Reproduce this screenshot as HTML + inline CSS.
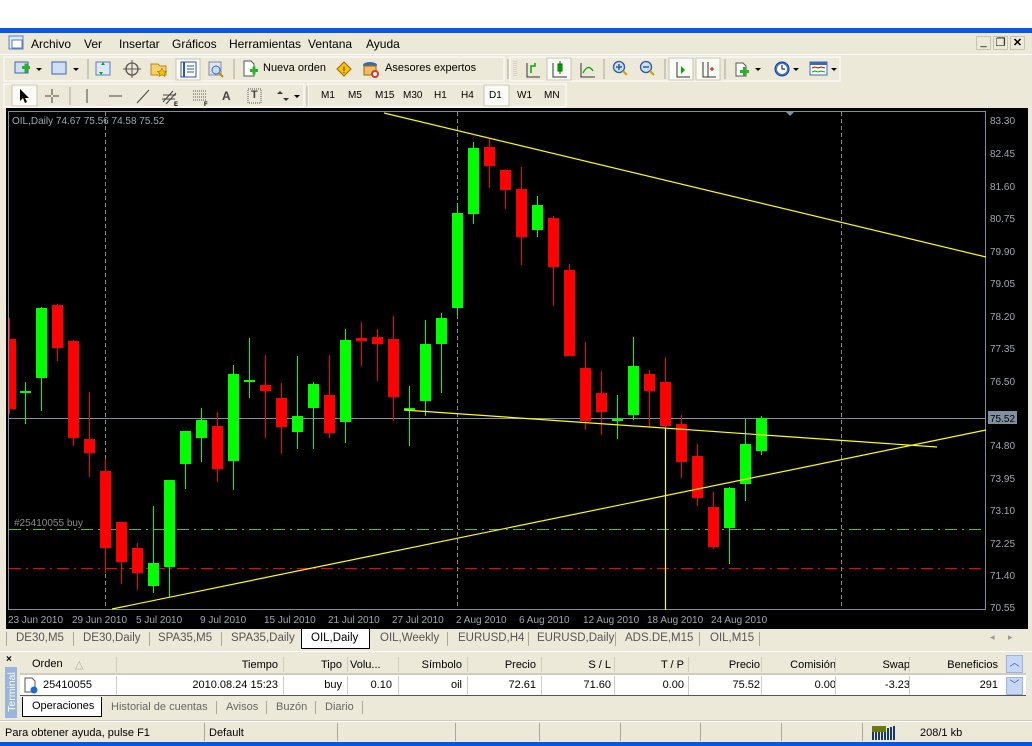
<!DOCTYPE html>
<html><head><meta charset="utf-8"><style>
*{margin:0;padding:0;box-sizing:border-box}
body{width:1032px;height:746px;overflow:hidden;background:#fff;font-family:"Liberation Sans",sans-serif;font-size:11px;color:#000;position:relative}
.abs{position:absolute}
.bar{background:#ece9d8}
.menu span{position:absolute;top:4px;font-size:12px}
.tb span{position:absolute;font-size:11px}
.tab{position:absolute;top:3px;color:#555;font-size:11.5px}
.hd{position:absolute;top:5px;text-align:right}
.sep{position:absolute;width:1px;background:#aca899}
</style></head><body>
<div class="abs" style="left:0;top:28px;width:1032px;height:5px;background:#0a56e0"></div>
<div class="abs bar" style="left:0;top:33px;width:1032px;height:713px"></div>
<!-- menu -->
<div class="abs menu" style="left:0;top:33px;width:1032px;height:21px">
<svg class="abs" style="left:8px;top:2px" width="17" height="16"><rect x="1" y="1" width="14" height="13" fill="#dde8f8" stroke="#5a7fc0"/><rect x="4" y="5" width="10" height="8" fill="#fff" stroke="#5a7fc0"/></svg>
<span style="left:31px">Archivo</span><span style="left:84px">Ver</span><span style="left:119px">Insertar</span><span style="left:172px">Gráficos</span><span style="left:229px">Herramientas</span><span style="left:308px">Ventana</span><span style="left:366px">Ayuda</span>
<div class="abs" style="left:976px;top:3px;width:15px;height:14px;border:1px solid #c8c4b0;text-align:center;line-height:11px">_</div>
<div class="abs" style="left:993px;top:3px;width:15px;height:14px;border:1px solid #c8c4b0;text-align:center;line-height:12px">❐</div>
<div class="abs" style="left:1010px;top:3px;width:15px;height:14px;border:1px solid #c8c4b0;text-align:center;line-height:12px;font-weight:bold">✕</div>
</div>
<div class="abs" style="left:0;top:54px;width:1032px;height:1px;background:#fff"></div>
<!-- toolbar 1 -->
<div class="abs tb" style="left:0;top:55px;width:1032px;height:28px">
<svg class="abs" style="left:0;top:0" width="1032" height="28">
<rect x="4" y="2" width="500" height="24" fill="none" stroke="#fff"/>
<rect x="510" y="2" width="330" height="24" fill="none" stroke="#fff"/>
<g fill="#33a" ><rect x="15" y="7" width="13" height="11" fill="#cfe0f6" stroke="#3a6ab0"/><path d="M22 11h8v3h-8z M24.5 8.5h3v9h-3z" fill="#2ab22a"/><path d="M36 13l3 3 3-3z" fill="#000"/>
<rect x="52" y="7" width="14" height="12" fill="#cfe0f6" stroke="#3a6ab0"/><path d="M73 13l3 3 3-3z" fill="#000"/></g>
<line x1="88" y1="4" x2="88" y2="24" stroke="#aca899"/>
<rect x="96" y="7" width="14" height="13" fill="#dde8f8" stroke="#5a7fc0"/><path d="M101 10l2-3 2 3zM103 17l-2 3-2-3z" fill="#0a0"/>
<circle cx="132" cy="14" r="6" fill="none" stroke="#555" stroke-width="1.3"/><path d="M132 5v18M123 14h18" stroke="#555"/>
<path d="M151 9h7l2 2h6v9h-15z" fill="#f3d36a" stroke="#b08a20"/><path d="M162 13l1.5 3 3 .4-2.2 2 .6 3-2.9-1.5-2.9 1.5.6-3-2.2-2 3-.4z" fill="#f6c400" stroke="#a07800" stroke-width=".6"/>
<rect x="176" y="4" width="24" height="21" fill="#fbfbf6" stroke="#c8c4b0"/><rect x="181" y="7" width="15" height="15" fill="#fff" stroke="#2a55a0"/><path d="M184 7v15" stroke="#2a55a0" stroke-width="2"/><path d="M187 11h7M187 14h7M187 17h7" stroke="#2a55a0"/>
<rect x="209" y="7" width="12" height="13" fill="#e0e6f0" stroke="#7b8aa8"/><circle cx="216" cy="15" r="4" fill="#cde" stroke="#3a6ab0"/><path d="M219 18l4 4" stroke="#c80" stroke-width="2"/>
<line x1="234" y1="4" x2="234" y2="24" stroke="#aca899"/>
<path d="M244 6h7l3 3v12h-10z" fill="#fff" stroke="#555"/><path d="M250 14h8v3h-8zM252.5 11.5h3v8h-3z" fill="#2ab22a"/>
<path d="M344 7l7 7-7 7-7-7z" fill="#f6c400" stroke="#a06a00"/><text x="342.5" y="18" font-size="9" font-weight="bold" fill="#a03000">!</text>
<ellipse cx="370" cy="10" rx="7" ry="3" fill="#3a6ab0"/><rect x="364" y="11" width="12" height="9" fill="#f0c060" stroke="#a06a00"/><circle cx="375" cy="19" r="4" fill="#d33"/><circle cx="375" cy="19" r="2" fill="#fff"/>
<line x1="508" y1="4" x2="508" y2="24" stroke="#aca899"/>
<path d="M514 6v16M516 6v16" stroke="#bbb" stroke-dasharray="1 1"/>
<path d="M527 8v14h13" stroke="#333" fill="none"/><path d="M531 18v-7h4v-3" stroke="#0a0" fill="none" stroke-width="1.5"/>
<rect x="547" y="3" width="24" height="22" fill="#fbfbf6" stroke="#c8c4b0"/><path d="M553 8v14h14" stroke="#333" fill="none"/><rect x="558" y="9" width="4" height="7" fill="#0c0" stroke="#060"/><path d="M560 6v13" stroke="#060"/>
<path d="M581 8v14h14" stroke="#333" fill="none"/><path d="M583 18q5-10 10-2" stroke="#0a0" fill="none" stroke-width="1.3"/>
<line x1="604" y1="4" x2="604" y2="24" stroke="#aca899"/>
<circle cx="619" cy="12" r="5.5" fill="#cfe0f6" stroke="#2a5aa0" stroke-width="1.3"/><path d="M616 12h6M619 9v6" stroke="#2a5aa0" stroke-width="1.5"/><path d="M623 16l4 4" stroke="#d9a000" stroke-width="2.2"/>
<circle cx="646" cy="12" r="5.5" fill="#cfe0f6" stroke="#2a5aa0" stroke-width="1.3"/><path d="M643 12h6" stroke="#2a5aa0" stroke-width="1.5"/><path d="M650 16l4 4" stroke="#d9a000" stroke-width="2.2"/>
<line x1="665" y1="4" x2="665" y2="24" stroke="#aca899"/>
<rect x="669" y="3" width="24" height="22" fill="#fbfbf6" stroke="#c8c4b0"/><path d="M677 7v15h13" stroke="#333" fill="none"/><path d="M681 11l4 4-4 4z" fill="#0a0"/>
<rect x="696" y="3" width="24" height="22" fill="#fbfbf6" stroke="#c8c4b0"/><path d="M703 7v15h13M708 7v15" stroke="#333" fill="none"/><path d="M710 14h4M712 12v4" stroke="#c00"/>
<line x1="725" y1="4" x2="725" y2="24" stroke="#aca899"/>
<path d="M736 8h7l3 3v10h-10z" fill="#fff" stroke="#555"/><path d="M740 15h9v3h-9zM743 12h3v9h-3z" fill="#2ab22a"/><path d="M755 13l3 3 3-3z" fill="#000"/>
<circle cx="782" cy="14" r="7" fill="#3a78d8" stroke="#1a3a90"/><circle cx="782" cy="14" r="5" fill="#fff"/><path d="M782 10v4h3" stroke="#000" fill="none"/><path d="M793 13l3 3 3-3z" fill="#000"/>
<rect x="810" y="7" width="17" height="13" fill="#fff" stroke="#3a6ab0"/><rect x="810" y="7" width="17" height="3" fill="#3a6ab0"/><path d="M812 13l3-1 3 1 3-1 4 1" stroke="#c00" fill="none"/><path d="M812 17l3-1 3 1 3-1 4 1" stroke="#0a0" fill="none"/><path d="M831 13l3 3 3-3z" fill="#000"/>
</svg>
<span style="left:263px;top:7px">Nueva orden</span><span style="left:385px;top:7px">Asesores expertos</span>
</div>
<!-- toolbar 2 -->
<div class="abs tb" style="left:0;top:83px;width:1032px;height:26px">
<svg class="abs" style="left:0;top:0" width="1032" height="26">
<rect x="4" y="1" width="300" height="23" fill="none" stroke="#fff"/><rect x="308" y="1" width="258" height="23" fill="none" stroke="#fff"/>
<rect x="12" y="2" width="25" height="21" fill="#fbfbf6" stroke="#c8c4b0"/><path d="M20 6v12l3-3 2 5 2-1-2-4h4z" fill="#000"/>
<path d="M52 6v6M52 14v6M45 13h6M53 13h6" stroke="#444"/>
<line x1="70" y1="4" x2="70" y2="22" stroke="#aca899"/>
<path d="M87 6v14" stroke="#444"/><path d="M109 13h13" stroke="#444"/><path d="M137 20l12-13" stroke="#444"/>
<path d="M163 19l10-11M166 21l10-11M163 12h13M162 16h13" stroke="#444"/><text x="174" y="23" font-size="6" font-weight="bold">E</text>
<path d="M193 8h14M193 11h14M193 14h14M193 17h14" stroke="#555" stroke-dasharray="1 1"/><text x="204" y="23" font-size="6" font-weight="bold">F</text>
<rect x="248" y="6" width="13" height="14" fill="none" stroke="#555" stroke-dasharray="1 1"/>
<path d="M277 11l3-3 3 3zM283 15l3 3 3-3z" fill="#333"/><path d="M294 12l3 3 3-3z" fill="#000"/>
<line x1="307" y1="3" x2="307" y2="23" stroke="#aca899"/>
<rect x="484" y="2" width="25" height="21" fill="#fbfbf6" stroke="#c8c4b0"/>
</svg>
<span style="left:222px;top:6px;font-size:12px;font-weight:bold;color:#444">A</span><span style="left:251px;top:6px;font-weight:bold;color:#444">T</span>
<span style="left:321px;top:7px;font-size:10px">M1</span><span style="left:348px;top:7px;font-size:10px">M5</span><span style="left:375px;top:7px;font-size:10px">M15</span><span style="left:403px;top:7px;font-size:10px">M30</span><span style="left:434px;top:7px;font-size:10px">H1</span><span style="left:461px;top:7px;font-size:10px">H4</span><span style="left:489px;top:7px;font-size:10px">D1</span><span style="left:517px;top:7px;font-size:10px">W1</span><span style="left:544px;top:7px;font-size:10px">MN</span>
</div>
<!-- chart -->
<svg class="abs" style="left:6px;top:108px" width="1022" height="521" viewBox="6 108 1022 521" font-family="Liberation Sans, sans-serif">
<rect x="6" y="108" width="1022" height="521" fill="#000"/>
<rect x="8.5" y="111.5" width="977" height="498" fill="none" stroke="#8090a0"/>
<g stroke="#8a8a8a" stroke-dasharray="4 3"><line x1="105.5" y1="112" x2="105.5" y2="609"/><line x1="457.5" y1="112" x2="457.5" y2="609"/><line x1="841.5" y1="112" x2="841.5" y2="609"/></g>
<line x1="9" y1="418.5" x2="985" y2="418.5" stroke="#8090a0"/>
<path d="M786 112h8l-4 4z" fill="#8090a0"/>
<line x1="9" y1="529.5" x2="985" y2="529.5" stroke="#3fbf3f" stroke-dasharray="12 5 2 5"/>
<line x1="9" y1="568.5" x2="985" y2="568.5" stroke="#ff0000" stroke-dasharray="12 5 2 5"/>
<text x="14" y="526" fill="#8a8a8a" font-size="10">#25410055 buy</text>
<text x="12" y="124" fill="#a0a8b0" font-size="10">OIL,Daily  74.67 75.56 74.58 75.52</text>
<g fill="#ff0000">
<rect x="9" y="318" width="1" height="96"/><rect x="9" y="339" width="7" height="70"/>
<rect x="57" y="304" width="1" height="57"/><rect x="52" y="305" width="11" height="43"/>
<rect x="73" y="340" width="1" height="106"/><rect x="68" y="341" width="11" height="97"/>
<rect x="89" y="392" width="1" height="85"/><rect x="84" y="439" width="11" height="14"/>
<rect x="105" y="459" width="1" height="114"/><rect x="100" y="471" width="11" height="77"/>
<rect x="121" y="522" width="1" height="62"/><rect x="116" y="522" width="11" height="40"/>
<rect x="137" y="543" width="1" height="47"/><rect x="132" y="548" width="11" height="25"/>
<rect x="217" y="412" width="1" height="70"/><rect x="212" y="426" width="11" height="43"/>
<rect x="265" y="355" width="1" height="83"/><rect x="260" y="385" width="11" height="6"/>
<rect x="281" y="383" width="1" height="71"/><rect x="276" y="398" width="11" height="29"/>
<rect x="329" y="355" width="1" height="83"/><rect x="324" y="395" width="11" height="38"/>
<rect x="361" y="322" width="1" height="44"/><rect x="356" y="338" width="11" height="3"/>
<rect x="377" y="329" width="1" height="52"/><rect x="372" y="337" width="11" height="7"/>
<rect x="393" y="316" width="1" height="105"/><rect x="388" y="339" width="11" height="58"/>
<rect x="489" y="139" width="1" height="49"/><rect x="484" y="147" width="11" height="19"/>
<rect x="505" y="169" width="1" height="40"/><rect x="500" y="170" width="11" height="20"/>
<rect x="521" y="167" width="1" height="98"/><rect x="516" y="189" width="11" height="48"/>
<rect x="553" y="216" width="1" height="90"/><rect x="548" y="218" width="11" height="49"/>
<rect x="569" y="264" width="1" height="92"/><rect x="564" y="270" width="11" height="86"/>
<rect x="585" y="342" width="1" height="88"/><rect x="580" y="368" width="11" height="53"/>
<rect x="601" y="371" width="1" height="64"/><rect x="596" y="393" width="11" height="19"/>
<rect x="649" y="370" width="1" height="57"/><rect x="644" y="374" width="11" height="17"/>
<rect x="665" y="357" width="1" height="73"/><rect x="660" y="382" width="11" height="44"/>
<rect x="681" y="415" width="1" height="63"/><rect x="676" y="424" width="11" height="38"/>
<rect x="697" y="444" width="1" height="62"/><rect x="692" y="456" width="11" height="42"/>
<rect x="713" y="492" width="1" height="57"/><rect x="708" y="507" width="11" height="40"/>
</g>
<g fill="#00ff00">
<rect x="25" y="382" width="1" height="42"/><rect x="20" y="391" width="11" height="2"/>
<rect x="41" y="307" width="1" height="104"/><rect x="36" y="308" width="11" height="70"/>
<rect x="153" y="506" width="1" height="87"/><rect x="148" y="563" width="11" height="23"/>
<rect x="169" y="480" width="1" height="117"/><rect x="164" y="480" width="11" height="87"/>
<rect x="185" y="431" width="1" height="58"/><rect x="180" y="431" width="11" height="33"/>
<rect x="201" y="408" width="1" height="54"/><rect x="196" y="420" width="11" height="18"/>
<rect x="233" y="365" width="1" height="125"/><rect x="228" y="374" width="11" height="87"/>
<rect x="249" y="338" width="1" height="60"/><rect x="244" y="380" width="11" height="2"/>
<rect x="297" y="356" width="1" height="93"/><rect x="292" y="416" width="11" height="16"/>
<rect x="313" y="382" width="1" height="67"/><rect x="308" y="384" width="11" height="24"/>
<rect x="345" y="329" width="1" height="114"/><rect x="340" y="340" width="11" height="82"/>
<rect x="409" y="386" width="1" height="60"/><rect x="404" y="408" width="11" height="2"/>
<rect x="425" y="320" width="1" height="96"/><rect x="420" y="344" width="11" height="57"/>
<rect x="441" y="313" width="1" height="80"/><rect x="436" y="318" width="11" height="26"/>
<rect x="457" y="203" width="1" height="112"/><rect x="452" y="213" width="11" height="95"/>
<rect x="473" y="142" width="1" height="82"/><rect x="468" y="148" width="11" height="66"/>
<rect x="537" y="196" width="1" height="41"/><rect x="532" y="205" width="11" height="25"/>
<rect x="617" y="395" width="1" height="44"/><rect x="612" y="419" width="11" height="2"/>
<rect x="633" y="337" width="1" height="83"/><rect x="628" y="366" width="11" height="49"/>
<rect x="729" y="487" width="1" height="77"/><rect x="724" y="488" width="11" height="40"/>
<rect x="745" y="419" width="1" height="82"/><rect x="740" y="444" width="11" height="40"/>
<rect x="761" y="416" width="1" height="39"/><rect x="756" y="418" width="11" height="33"/>
</g>
<g stroke="#ffff00" stroke-width="1.2" fill="none">
<line x1="384" y1="113" x2="986" y2="257"/>
<line x1="404" y1="410" x2="937" y2="447"/>
<line x1="112" y1="609" x2="986" y2="430"/>
<line x1="665.5" y1="428" x2="665.5" y2="610"/>
</g>
<g fill="#a0a8b0" font-size="10">
<text x="990" y="124">83.30</text><text x="990" y="157">82.45</text><text x="990" y="190">81.60</text><text x="990" y="222">80.75</text><text x="990" y="255">79.90</text><text x="990" y="287">79.05</text><text x="990" y="320">78.20</text><text x="990" y="352">77.35</text><text x="990" y="385">76.50</text><text x="990" y="449">74.80</text><text x="990" y="482">73.95</text><text x="990" y="514">73.10</text><text x="990" y="547">72.25</text><text x="990" y="579">71.40</text><text x="990" y="611">70.55</text>
</g>
<rect x="988" y="411" width="29" height="13" fill="#8090a0"/><text x="990" y="422" fill="#000" font-size="10">75.52</text>
<g fill="#a0a8b0" font-size="10">
<text x="8" y="623">23 Jun 2010</text><text x="72" y="623">29 Jun 2010</text><text x="136" y="623">5 Jul 2010</text><text x="200" y="623">9 Jul 2010</text><text x="264" y="623">15 Jul 2010</text><text x="328" y="623">21 Jul 2010</text><text x="392" y="623">27 Jul 2010</text><text x="456" y="623">2 Aug 2010</text><text x="519" y="623">6 Aug 2010</text><text x="583" y="623">12 Aug 2010</text><text x="647" y="623">18 Aug 2010</text><text x="711" y="623">24 Aug 2010</text>
</g>
</svg>
<!-- chart tabs -->
<div class="abs" style="left:6px;top:629px;width:1022px;height:21px">
<span class="tab" style="left:10px">DE30,M5</span><span class="tab" style="left:77px">DE30,Daily</span><span class="tab" style="left:152px">SPA35,M5</span><span class="tab" style="left:225px">SPA35,Daily</span>
<div class="abs" style="left:295px;top:0;width:69px;height:20px;background:#fff;border:1px solid #000;border-top:none"></div>
<span class="tab" style="left:305px;color:#000">OIL,Daily</span><span class="tab" style="left:374px">OIL,Weekly</span><span class="tab" style="left:452px">EURUSD,H4</span><span class="tab" style="left:531px">EURUSD,Daily</span><span class="tab" style="left:619px">ADS.DE,M15</span><span class="tab" style="left:704px">OIL,M15</span>
<div class="sep" style="left:0;top:3px;height:14px"></div><div class="sep" style="left:67px;top:3px;height:14px"></div><div class="sep" style="left:143px;top:3px;height:14px"></div><div class="sep" style="left:215px;top:3px;height:14px"></div><div class="sep" style="left:441px;top:3px;height:14px"></div><div class="sep" style="left:522px;top:3px;height:14px"></div><div class="sep" style="left:609px;top:3px;height:14px"></div><div class="sep" style="left:693px;top:3px;height:14px"></div><div class="sep" style="left:753px;top:3px;height:14px"></div>
<span class="tab" style="left:984px;font-size:9px;color:#999">◂</span><span class="tab" style="left:1002px;font-size:9px;color:#999">▸</span>
</div>
<div class="abs" style="left:0;top:651px;width:1032px;height:1px;background:#fff"></div>
<!-- terminal -->
<div class="abs" style="left:4px;top:653px;width:13px;height:65px">
<div class="abs" style="left:2px;top:1px;font-weight:bold;font-size:10px">×</div>
<div class="abs" style="left:1px;top:14px;width:12px;height:51px;background:#9ab4dc"></div>
<div class="abs" style="left:-17px;top:33px;transform:rotate(-90deg);color:#fff;font-size:10.5px;width:50px;text-align:center">Terminal</div>
</div>
<div class="abs" style="left:20px;top:654px;width:1006px;height:42px;background:#fff;border-bottom:1px solid #555"></div>
<div class="abs" style="left:20px;top:654px;width:1006px;height:21px;background:#ece9d8;border-bottom:2px solid #d0cdc0">
<span class="abs" style="left:12px;top:4px">Orden</span><span class="abs" style="left:55px;top:4px;color:#aaa">△</span>
<div class="hd" style="left:100px;width:158px">Tiempo</div><div class="hd" style="left:270px;width:52px">Tipo</div><div class="hd" style="left:330px;width:42px;text-align:left">Volu...</div><div class="hd" style="left:380px;width:62px">Símbolo</div><div class="hd" style="left:450px;width:66px">Precio</div><div class="hd" style="left:520px;width:71px">S / L</div><div class="hd" style="left:600px;width:64px">T / P</div><div class="hd" style="left:670px;width:70px">Precio</div><div class="hd" style="left:750px;width:66px">Comisión</div><div class="hd" style="left:820px;width:70px">Swap</div><div class="hd" style="left:900px;width:78px">Beneficios</div>
<div class="sep" style="left:96px;top:3px;height:15px;background:#d0cdc0"></div><div class="sep" style="left:263px;top:3px;height:15px;background:#d0cdc0"></div><div class="sep" style="left:327px;top:3px;height:15px;background:#d0cdc0"></div><div class="sep" style="left:378px;top:3px;height:15px;background:#d0cdc0"></div><div class="sep" style="left:447px;top:3px;height:15px;background:#d0cdc0"></div><div class="sep" style="left:521px;top:3px;height:15px;background:#d0cdc0"></div><div class="sep" style="left:594px;top:3px;height:15px;background:#d0cdc0"></div><div class="sep" style="left:668px;top:3px;height:15px;background:#d0cdc0"></div><div class="sep" style="left:741px;top:3px;height:15px;background:#d0cdc0"></div><div class="sep" style="left:815px;top:3px;height:15px;background:#d0cdc0"></div><div class="sep" style="left:889px;top:3px;height:15px;background:#d0cdc0"></div>
</div>
<div class="abs" style="left:20px;top:676px;width:986px;height:19px">
<svg class="abs" style="left:3px;top:1px" width="16" height="17"><path d="M2 1h7l3 3v11H2z" fill="#fff" stroke="#555"/><circle cx="11" cy="13" r="3.5" fill="#1a6ad8"/></svg>
<span class="abs" style="left:23px;top:3px">25410055</span>
<div class="hd" style="left:100px;width:158px;top:3px">2010.08.24 15:23</div><div class="hd" style="left:270px;width:52px;top:3px">buy</div><div class="hd" style="left:330px;width:42px;top:3px">0.10</div><div class="hd" style="left:380px;width:62px;top:3px">oil</div><div class="hd" style="left:450px;width:66px;top:3px">72.61</div><div class="hd" style="left:520px;width:71px;top:3px">71.60</div><div class="hd" style="left:600px;width:64px;top:3px">0.00</div><div class="hd" style="left:670px;width:70px;top:3px">75.52</div><div class="hd" style="left:750px;width:66px;top:3px">0.00</div><div class="hd" style="left:820px;width:70px;top:3px">-3.23</div><div class="hd" style="left:900px;width:78px;top:3px">291</div>
<div class="sep" style="left:96px;top:0;height:19px;background:#ccc"></div><div class="sep" style="left:263px;top:0;height:19px;background:#ccc"></div><div class="sep" style="left:327px;top:0;height:19px;background:#ccc"></div><div class="sep" style="left:378px;top:0;height:19px;background:#ccc"></div><div class="sep" style="left:447px;top:0;height:19px;background:#ccc"></div><div class="sep" style="left:521px;top:0;height:19px;background:#ccc"></div><div class="sep" style="left:594px;top:0;height:19px;background:#ccc"></div><div class="sep" style="left:668px;top:0;height:19px;background:#ccc"></div><div class="sep" style="left:741px;top:0;height:19px;background:#ccc"></div><div class="sep" style="left:815px;top:0;height:19px;background:#ccc"></div><div class="sep" style="left:889px;top:0;height:19px;background:#ccc"></div>
</div>
<div class="abs" style="left:1006px;top:655px;width:17px;height:18px;background:#c6d6f4;border:1px solid #9ab4dc;text-align:center;color:#3a5aa0;font-size:10px;line-height:16px">︿</div>
<div class="abs" style="left:1006px;top:677px;width:17px;height:18px;background:#c6d6f4;border:1px solid #9ab4dc;text-align:center;color:#3a5aa0;font-size:10px;line-height:16px">﹀</div>
<!-- bottom tabs -->
<div class="abs" style="left:22px;top:697px;width:80px;height:20px;background:#fff;border:1px solid #000;border-top:none"></div>
<span class="abs" style="left:32px;top:700px">Operaciones</span>
<span class="abs" style="left:111px;top:701px;color:#666">Historial de cuentas</span><span class="abs" style="left:226px;top:701px;color:#666">Avisos</span><span class="abs" style="left:276px;top:701px;color:#666">Buzón</span><span class="abs" style="left:325px;top:701px;color:#666">Diario</span>
<div class="sep" style="left:216px;top:701px;height:13px"></div><div class="sep" style="left:266px;top:701px;height:13px"></div><div class="sep" style="left:315px;top:701px;height:13px"></div><div class="sep" style="left:362px;top:701px;height:13px"></div>
<div class="abs" style="left:0;top:720px;width:1032px;height:1px;background:#d0cdc0"></div>
<div class="abs" style="left:0;top:721px;width:1032px;height:1px;background:#fff"></div>
<!-- status -->
<span class="abs" style="left:5px;top:727px">Para obtener ayuda, pulse F1</span>
<span class="abs" style="left:209px;top:727px">Default</span>
<div class="sep" style="left:204px;top:723px;height:18px"></div><div class="sep" style="left:337px;top:723px;height:18px"></div><div class="sep" style="left:455px;top:723px;height:18px"></div><div class="sep" style="left:539px;top:723px;height:18px"></div><div class="sep" style="left:620px;top:723px;height:18px"></div><div class="sep" style="left:700px;top:723px;height:18px"></div><div class="sep" style="left:781px;top:723px;height:18px"></div><div class="sep" style="left:862px;top:723px;height:18px"></div>
<svg class="abs" style="left:872px;top:726px" width="26" height="14"><g fill="#1a3a6a"><rect x="0" y="4" width="2" height="10"/><rect x="3" y="4" width="2" height="10"/><rect x="6" y="4" width="2" height="10"/><rect x="9" y="4" width="2" height="10"/><rect x="12" y="4" width="2" height="10"/><rect x="15" y="2" width="2" height="12"/><rect x="18" y="1" width="2" height="13"/><rect x="21" y="0" width="2" height="14"/></g><g fill="#6a7a10"><rect x="0" y="0" width="14" height="6"/></g></svg>
<span class="abs" style="left:920px;top:727px">208/1 kb</span>
<div class="abs" style="left:0;top:742px;width:1032px;height:4px;background:#0a56e0"></div>
</body></html>
